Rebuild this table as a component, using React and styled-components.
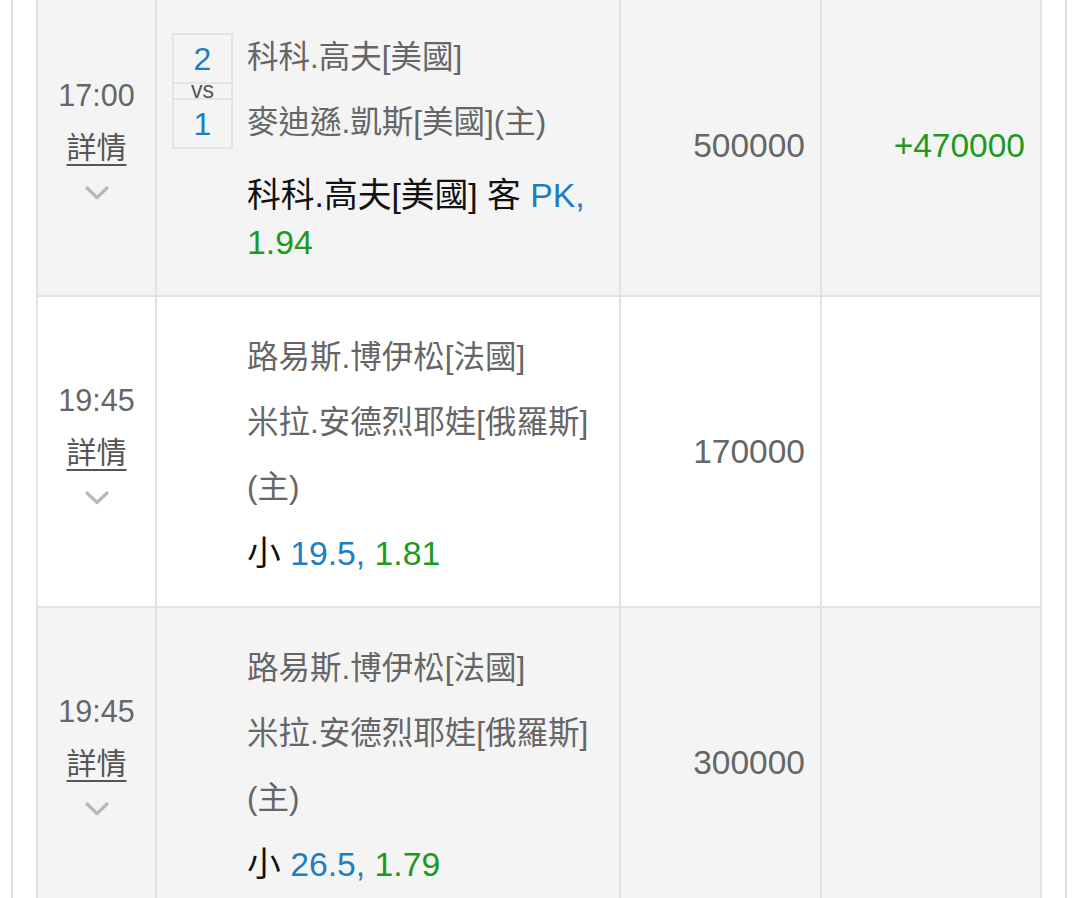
import React from "react";
import styled, { createGlobalStyle } from "styled-components";

const Global = createGlobalStyle`
  html, body { margin: 0; padding: 0; background: #ffffff; }
  body {
    font-family: "Liberation Sans", "Noto Sans CJK TC", "Noto Sans CJK SC", sans-serif;
    overflow: hidden;
  }
`;

const Frame = styled.div`
  margin: -5px 0 0 11px;
  width: 1056px;
  box-sizing: border-box;
  border-left: 2px solid #dedede;
  border-right: 2px solid #dedede;
  padding: 0 23px;
  min-height: 920px;
`;

const Table = styled.div`
  border-left: 2px solid #e2e2e2;
  border-right: 2px solid #e2e2e2;
  border-top: 2px solid #e2e2e2;
`;

const Row = styled.div`
  display: grid;
  grid-template-columns: 119px 464px 201px 1fr;
  background: ${(p) => (p.$alt ? "#f4f4f4" : "#ffffff")};
  border-bottom: 2px solid #e2e2e2;
`;

const Cell = styled.div`
  border-right: ${(p) => (p.$last ? "none" : "2px solid #e2e2e2")};
  display: flex;
  align-items: center;
  justify-content: ${(p) => (p.$right ? "flex-end" : "flex-start")};
  padding-right: ${(p) => (p.$right ? "15px" : "0")};
`;

const TimeCell = styled(Cell)`
  flex-direction: column;
  justify-content: center;
  padding-bottom: 18px;
`;

const Time = styled.div`
  font-size: 30.5px;
  line-height: 40px;
  color: #666;
`;

const Detail = styled.a`
  font-size: 30px;
  line-height: 66px;
  color: #555;
  text-decoration: underline;
  text-decoration-thickness: 2px;
  text-underline-offset: 6px;
`;

const Chevron = styled.svg`
  display: block;
  width: 24px;
  height: 14px;
  margin-top: 5px;
`;

const MatchCell = styled(Cell)`
  align-items: flex-start;
  padding: 28px 14px 29px 0;
`;

const Gutter = styled.div`
  width: 90px;
  flex-shrink: 0;
`;

const ScoreBox = styled.div`
  margin: 8px 0 0 15px;
  width: 61px;
  box-sizing: border-box;
  border: 2px solid #e4e4e4;
  display: flex;
  flex-direction: column;
  text-align: center;
`;

const Score = styled.div`
  height: 47px;
  line-height: 49px;
  font-size: 32px;
  color: #1f7ec2;
`;

const Vs = styled.div`
  height: 14px;
  line-height: 12px;
  font-size: 23px;
  color: #555;
  border-top: 2px solid #e4e4e4;
  border-bottom: 2px solid #e4e4e4;
`;

const Info = styled.div`
  flex: 1;
  min-width: 0;
`;

const Team = styled.div`
  font-size: 31.5px;
  line-height: 65px;
  color: #666;
`;

const Bet = styled.div`
  margin-top: ${(p) => p.$gap}px;
  font-size: 33.75px;
  line-height: 47px;
  color: #111;
`;

const Blue = styled.span`
  color: #1f7ec2;
`;

const Green = styled.span`
  color: #1c9a1c;
`;

const Amount = styled.div`
  font-size: 33.5px;
  color: ${(p) => (p.$win ? "#1c9a1c" : "#666")};
`;

const ChevronIcon = () => (
  <Chevron viewBox="0 0 24 14">
    <polyline
      points="2,2 12,11.5 22,2"
      fill="none"
      stroke="#b8b8b8"
      strokeWidth="3.2"
      strokeLinecap="round"
      strokeLinejoin="round"
    />
  </Chevron>
);

const rows = [
  {
    alt: true,
    time: "17:00",
    score: ["2", "1"],
    teams: ["科科.高夫[美國]", "麥迪遜.凱斯[美國](主)"],
    bet: ["科科.高夫[美國] 客 ", "PK,", " 1.94"],
    gap: 17,
    stake: "500000",
    result: "+470000",
  },
  {
    alt: false,
    time: "19:45",
    teams: ["路易斯.博伊松[法國]", "米拉.安德烈耶娃[俄羅斯](主)"],
    bet: ["小 ", "19.5,", " 1.81"],
    gap: 10,
    stake: "170000",
  },
  {
    alt: true,
    time: "19:45",
    teams: ["路易斯.博伊松[法國]", "米拉.安德烈耶娃[俄羅斯](主)"],
    bet: ["小 ", "26.5,", " 1.79"],
    gap: 10,
    stake: "300000",
  },
];

export default function App() {
  return (
    <>
      <Global />
      <Frame>
        <Table>
          {rows.map((r, i) => (
            <Row key={i} $alt={r.alt}>
              <TimeCell>
                <Time>{r.time}</Time>
                <Detail>詳情</Detail>
                <ChevronIcon />
              </TimeCell>
              <MatchCell>
                <Gutter>
                  {r.score && (
                    <ScoreBox>
                      <Score>{r.score[0]}</Score>
                      <Vs>vs</Vs>
                      <Score>{r.score[1]}</Score>
                    </ScoreBox>
                  )}
                </Gutter>
                <Info>
                  {r.teams.map((t) => (
                    <Team key={t}>{t}</Team>
                  ))}
                  <Bet $gap={r.gap}>
                    {r.bet[0]}
                    <Blue>{r.bet[1]}</Blue>
                    <Green>{r.bet[2]}</Green>
                  </Bet>
                </Info>
              </MatchCell>
              <Cell $right>
                <Amount>{r.stake}</Amount>
              </Cell>
              <Cell $right $last>
                {r.result && <Amount $win>{r.result}</Amount>}
              </Cell>
            </Row>
          ))}
        </Table>
      </Frame>
    </>
  );
}
